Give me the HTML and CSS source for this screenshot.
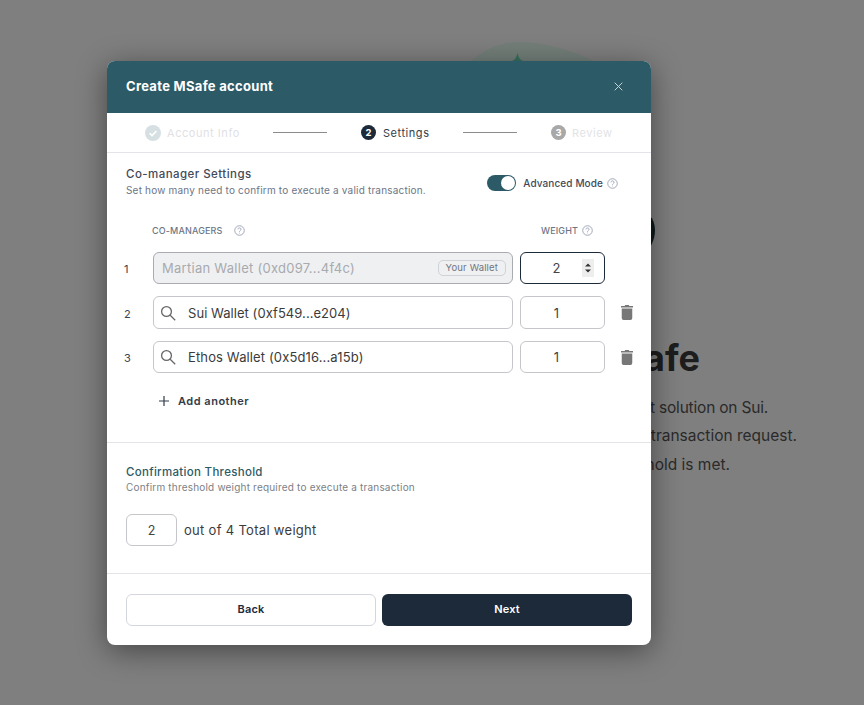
FILE: index.html
```html
<!DOCTYPE html>
<html lang="en">
<head>
<meta charset="utf-8">
<title>Create MSafe account</title>
<link rel="stylesheet" href="styles.css">
</head>
<body>
<main class="hero">
  <svg class="hero-logo" width="260" height="230" viewBox="0 0 260 230" aria-hidden="true">
    <path class="logo-pale" d="M69 20C85 6 100 0 118 0C145 0 170 8 195 20Z"/>
    <path class="logo-green" d="M111 19C114 18 115 16 116.500 11C118 16 119 18 122 19Z"/>
    <path class="logo-dark" d="M245 174L251 176C256 186 255 198 246 210Z"/>
  </svg>
  <h1 class="hero-title">MSafe</h1>
  <p class="hero-line">MSafe is the first multisig management solution on Sui.</p>
  <p class="hero-line">Co-managers sign and confirm every transaction request.</p>
  <p class="hero-line">It runs only once the threshold is met.</p>
</main>
<div class="backdrop">
  <section class="modal">
    <header class="modal-head">
      <h2 class="modal-title">Create MSafe account</h2>
      <svg class="close" width="9" height="9" viewBox="0 0 9 9" aria-hidden="true"><path d="M.7.7l7.6 7.6M8.3.7L.7 8.3"/></svg>
    </header>
    <nav class="steps">
      <div class="step step-done">
        <svg width="16" height="16" viewBox="0 0 16 16" aria-hidden="true"><circle class="done-bg" cx="8" cy="8" r="8"/><path class="done-check" d="M4.6 8.2l2.4 2.4 4.4-4.6"/></svg>
        <span>Account Info</span>
      </div>
      <i class="step-line"></i>
      <div class="step step-active"><b class="step-num">2</b><span>Settings</span></div>
      <i class="step-line"></i>
      <div class="step step-todo"><b class="step-num">3</b><span>Review</span></div>
    </nav>
    <div class="settings">
      <div class="settings-head">
        <div class="settings-copy">
          <h3 class="h-sub">Co-manager Settings</h3>
          <p class="desc">Set how many need to confirm to execute a valid transaction.</p>
        </div>
        <div class="mode">
          <span class="toggle"><span class="knob"></span></span>
          <span class="mode-label">Advanced Mode</span>
          <svg class="help help-m" viewBox="0 0 12 12" aria-hidden="true"><circle cx="6" cy="6" r="5.2"/><path d="M4.3 4.8C4.3 3.8 5 3.2 6 3.2s1.7.6 1.7 1.5C7.7 6 6 6 6 7.3M6 8.4v.7"/></svg>
        </div>
      </div>
      <div class="cols">
        <span class="col col-a">CO-MANAGERS <svg class="help" viewBox="0 0 12 12" aria-hidden="true"><circle cx="6" cy="6" r="5.2"/><path d="M4.3 4.8C4.3 3.8 5 3.2 6 3.2s1.7.6 1.7 1.5C7.7 6 6 6 6 7.3M6 8.4v.7"/></svg></span>
        <span class="col col-b">WEIGHT <svg class="help" viewBox="0 0 12 12" aria-hidden="true"><circle cx="6" cy="6" r="5.2"/><path d="M4.3 4.8C4.3 3.8 5 3.2 6 3.2s1.7.6 1.7 1.5C7.7 6 6 6 6 7.3M6 8.4v.7"/></svg></span>
      </div>
      <div class="row row-1">
        <span class="idx">1</span>
        <div class="field field-off"><span class="addr addr-off">Martian Wallet (0xd097...4f4c)</span><span class="tag">Your Wallet</span></div>
        <div class="num num-focus">2
          <span class="spin"><svg width="8" height="14" viewBox="0 0 8 14" aria-hidden="true"><path d="M4 2.500L7 5.500H1zM4 11.500L1 8.500H7z"/></svg></span>
        </div>
      </div>
      <div class="row row-2">
        <span class="idx">2</span>
        <div class="field"><svg class="search" width="16" height="16" viewBox="0 0 16 16" aria-hidden="true"><circle cx="6.5" cy="6.5" r="4.9"/><path d="M10.2 10.2l5 5"/></svg><span class="addr">Sui Wallet (0xf549...e204)</span></div>
        <div class="num">1</div>
        <svg class="trash" width="12" height="15" viewBox="0 0 13 16" aria-hidden="true"><path d="M4.500 0h4l.5 1h4v1.600H0V1h4zM.8 3.800h11.400V14a2 2 0 0 1-2 2H2.800a2 2 0 0 1-2-2z"/></svg>
      </div>
      <div class="row row-3">
        <span class="idx">3</span>
        <div class="field"><svg class="search" width="16" height="16" viewBox="0 0 16 16" aria-hidden="true"><circle cx="6.5" cy="6.5" r="4.9"/><path d="M10.2 10.2l5 5"/></svg><span class="addr addr-wide">Ethos Wallet (0x5d16...a15b)</span></div>
        <div class="num">1</div>
        <svg class="trash" width="12" height="15" viewBox="0 0 13 16" aria-hidden="true"><path d="M4.500 0h4l.5 1h4v1.600H0V1h4zM.8 3.800h11.400V14a2 2 0 0 1-2 2H2.800a2 2 0 0 1-2-2z"/></svg>
      </div>
      <div class="add">
        <svg width="10" height="10" viewBox="0 0 10 10" aria-hidden="true"><path d="M5 0v10M0 5h10"/></svg>
        <span>Add another</span>
      </div>
    </div>
    <div class="threshold">
      <h3 class="h-teal">Confirmation Threshold</h3>
      <p class="desc desc-gray">Confirm threshold weight required to execute a transaction</p>
      <div class="out">
        <div class="num num-small">2</div>
        <span class="out-text">out of 4 Total weight</span>
      </div>
    </div>
    <footer class="actions">
      <button class="btn btn-back" type="button">Back</button>
      <button class="btn btn-next" type="button">Next</button>
    </footer>
  </section>
</div>
</body>
</html>
```

FILE: styles.css
```css
* { box-sizing: border-box; }
html, body { margin: 0; height: 100%; }
body {
  font-family: "Inter", "Liberation Sans", sans-serif;
  background: #fff;
  overflow: hidden;
}
h1, h2, h3, p { margin: 0; }

/* page behind the dialog */
.hero {
  height: 705px;
  position: relative;
  color: #222;
}
.hero-logo { position: absolute; left: 401px; top: 42px; }
.logo-pale { fill: #e8fff4; }
.logo-green { fill: #6fe0c0; }
.logo-dark { fill: #1c3434; }
.hero-title {
  position: absolute;
  right: 164px;
  top: 333px;
  font-size: 36px;
  line-height: 50px;
  font-weight: 700;
  white-space: nowrap;
  color: #3a3a3a;
}
.hero-line {
  position: absolute;
  font-size: 15.5px;
  line-height: 28px;
  white-space: nowrap;
  color: #555;
}
.hero-line:nth-of-type(1) { right: 96px; top: 394px; letter-spacing: -.2px; }
.hero-line:nth-of-type(2) { right: 67px; top: 422px; }
.hero-line:nth-of-type(3) { right: 134px; top: 451px; }

/* dialog */
.backdrop {
  position: absolute;
  inset: 0;
  background: rgba(0, 0, 0, .5);
  padding: 61px 0 0 107px;
}
.modal {
  width: 544px;
  height: 584px;
  background: #fff;
  border-radius: 8px;
  box-shadow: 0 6px 30px rgba(0, 0, 0, .45);
  overflow: hidden;
}
.modal-head {
  height: 52px;
  background: #2c5a67;
  padding: 0 28px 2px 19px;
  display: flex;
  align-items: center;
  justify-content: space-between;
}
.modal-title { font-size: 13px; font-weight: 700; color: #fff; letter-spacing: .3px; }
.close { stroke: #c3d3d8; stroke-width: 1; fill: none; }

/* stepper */
.steps {
  height: 40px;
  border-bottom: 1px solid #e3e4e8;
  padding-left: 38px;
  display: flex;
  align-items: center;
  font-size: 11px;
  letter-spacing: .55px;
}
.step { display: flex; align-items: center; gap: 6px; }
.step-done { width: 128px; color: #dfe1e5; }
.step-active { width: 102px; margin-left: 34px; gap: 7px; color: #333c48; }
.step-todo { margin-left: 34px; color: #e2e3e6; }
.done-bg { fill: #d6e0e3; }
.done-check { fill: none; stroke: #fff; stroke-width: 1.6; }
.step-line { width: 54px; height: 1px; background: #8b8b8b; }
.step-num {
  width: 15px;
  height: 15px;
  border-radius: 50%;
  background: #1c2a3a;
  color: #fff;
  font-size: 9.5px;
  font-weight: 700;
  letter-spacing: 0;
  display: flex;
  align-items: center;
  justify-content: center;
}
.step-todo .step-num { background: #a8a8a8; }

/* settings */
.settings { height: 290px; border-bottom: 1px solid #e3e4e8; padding: 14px 0 0 19px; }
.settings-head { display: flex; justify-content: space-between; height: 41px; padding-right: 33px; }
.h-sub { font-size: 11.5px; line-height: 15px; font-weight: 500; color: #3f4a5a; letter-spacing: .45px; }
.desc { font-size: 10px; line-height: 13px; margin-top: 2px; color: #6d7686; letter-spacing: .19px; }
.desc-gray { color: #7c7f85; margin-top: 1px; }
.mode { display: flex; align-items: center; height: 16px; margin-top: 8px; }
.toggle {
  width: 29px;
  height: 16px;
  border-radius: 8px;
  background: #2c5a67;
  padding: 1px;
  display: flex;
  justify-content: flex-end;
}
.knob { width: 14px; height: 14px; border-radius: 50%; background: #fff; }
.mode-label { margin-left: 7px; font-size: 10px; font-weight: 500; color: #3f4a5a; letter-spacing: .1px; }
.help { width: 11px; height: 11px; fill: none; stroke: #8f98ab; stroke-width: .9; vertical-align: -2px; margin-left: 4px; }
.cols { display: flex; height: 24px; align-items: center; margin-top: 10px; font-size: 9px; font-weight: 500; color: #6d7686; letter-spacing: .15px; }
.col-a { width: 388px; padding-left: 26px; }
.col-a .help { margin-left: 9px; }
.col-b { padding-left: 27px; }
.col-b .help { margin-left: 1px; }
.row { display: flex; align-items: center; }
.row-1 { margin-top: 10px; height: 32px; }
.row-2 { margin-top: 12px; height: 33px; }
.row-3 { margin-top: 12px; height: 32px; }
.idx { width: 29px; margin-left: -2px; padding-top: 2px; font-size: 11px; color: #3a4454; }
.field {
  width: 360px;
  height: 100%;
  border: 1px solid #c4c6ca;
  border-radius: 6px;
  display: flex;
  align-items: center;
  padding: 0 6px;
}
.field-off { background: #eff0f2; border-color: #a9abb0; padding-left: 8px; justify-content: space-between; }
.search { fill: none; stroke: #666; stroke-width: 1.3; margin-right: 12px; }
.addr { font-size: 13px; color: #3b3b3b; letter-spacing: .05px; }
.addr-wide { letter-spacing: .13px; }
.addr-off { color: #a8aaae; letter-spacing: .27px; }
.tag {
  font-size: 9.5px;
  line-height: 14px;
  padding: 0 7px;
  border: 1px solid #cfd2d6;
  border-radius: 5px;
  color: #6f7580;
  letter-spacing: .15px;
}
.num {
  width: 85px;
  height: 100%;
  margin-left: 7px;
  border: 1px solid #c4c6ca;
  border-radius: 6px;
  display: flex;
  align-items: center;
  justify-content: center;
  padding-right: 12px;
  font-size: 13px;
  color: #444;
  position: relative;
}
.num-focus { border-color: #1c2a3a; }
.spin {
  position: absolute;
  right: 10px;
  top: 6px;
  width: 12px;
  height: 18px;
  background: #eee;
  display: flex;
  align-items: center;
  justify-content: center;
  fill: #333;
}
.trash { margin-left: 16px; fill: #777; }
.add { display: flex; align-items: center; margin: 21px 0 0 33px; gap: 9px; font-size: 11px; font-weight: 600; color: #333c48; letter-spacing: .5px; }
.add svg { stroke: #333c48; stroke-width: 1.2; }

/* threshold */
.threshold { height: 131px; border-bottom: 1px solid #e3e4e8; padding: 22px 19px 0; }
.h-teal { font-size: 11.5px; line-height: 15px; font-weight: 500; color: #2c5a67; letter-spacing: .3px; }
.out { display: flex; align-items: center; height: 32px; margin-top: 20px; }
.num-small { width: 51px; margin-left: 0; padding-right: 0; font-size: 12.5px; }
.out-text { margin-left: 7px; font-size: 13px; color: #3b3b3b; letter-spacing: .3px; }

/* footer */
.actions { display: flex; gap: 6px; padding: 20px 19px 0; }
.btn {
  height: 32px;
  width: 250px;
  padding: 0 0 2px;
  border-radius: 6px;
  font: 600 11px "Inter", "Liberation Sans", sans-serif;
  letter-spacing: .2px;
  border: 1px solid #d3d6dc;
  background: #fff;
  color: #1c2a3a;
}
.btn-next { border: 0; background: #1c2a3a; color: #fff; }
```
